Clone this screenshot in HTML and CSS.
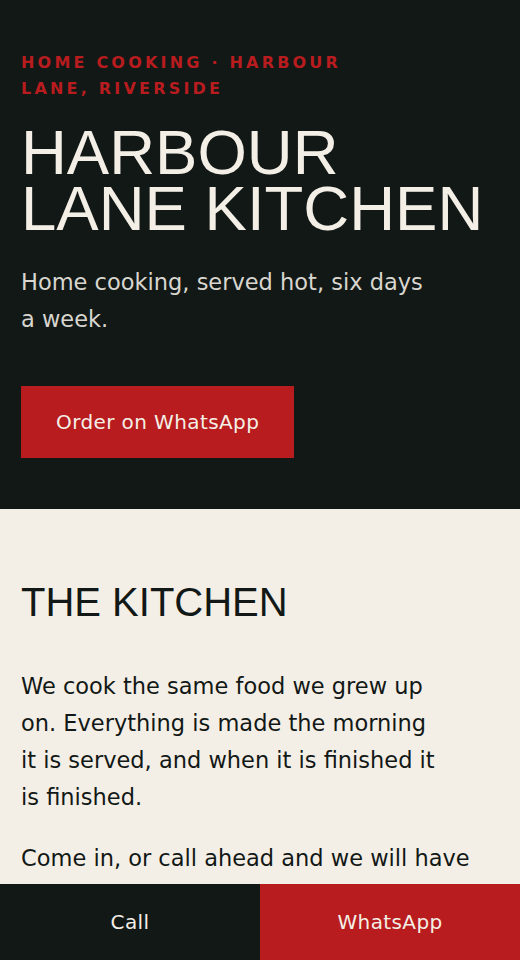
FILE: index.html
```html
<!DOCTYPE html>
<html lang="en">
<head>
  <meta charset="UTF-8">
  <title>Harbour Lane Kitchen</title>
  <link rel="stylesheet" href="styles.css">
</head>
<body>
  <header class="hero">
    <p class="eyebrow">Home cooking · Harbour Lane, Riverside</p>
    <h1>Harbour Lane Kitchen</h1>
    <p class="lead">Home cooking, served hot, six days a week.</p>
    <a class="btn" href="#">Order on WhatsApp</a>
  </header>

  <section class="kitchen">
    <h2>The Kitchen</h2>
    <p>We cook the same food we grew up on. Everything is made the morning it is served, and when it is finished it is finished.</p>
    <p>Come in, or call ahead and we will have your order ready when you arrive.</p>
  </section>

  <nav class="action-bar">
    <a class="call" href="#">Call</a>
    <a class="whatsapp" href="#">WhatsApp</a>
  </nav>
</body>
</html>
```

FILE: styles.css
```css
body {
  margin: 0;
  font-family: "DejaVu Sans", sans-serif;
  background: #f4efe6;
  color: #121816;
  text-wrap: pretty;
}
.hero {
  background: #121816;
  color: #f4efe6;
  padding: 50px 21px 51px;
}
.eyebrow {
  margin: 0 0 22px;
  color: #b81c1e;
  font-size: 16px;
  font-weight: bold;
  letter-spacing: 0.2em;
  line-height: 26px;
  text-transform: uppercase;
}
h1, h2 {
  font-family: "Liberation Sans", Arial, sans-serif;
  font-weight: normal;
  text-transform: uppercase;
}
h1 {
  margin: 0;
  font-size: 63.5px;
  line-height: 56px;
}
.lead {
  margin: 28px 0 48px;
  color: #d8d6cf;
  font-size: 22.5px;
  line-height: 37px;
}
.btn {
  display: inline-block;
  background: #b81c1e;
  color: #f4efe6;
  text-decoration: none;
  font-size: 20px;
  letter-spacing: 0.02em;
  padding: 24px 35px;
}
.kitchen {
  padding: 69px 21px 120px;
}
h2 {
  margin: 0 0 42px;
  font-size: 40px;
  line-height: 48px;
}
.kitchen p {
  margin: 0 0 24px;
  font-size: 22.5px;
  line-height: 37px;
}
.action-bar {
  position: fixed;
  left: 0;
  right: 0;
  bottom: 0;
  display: grid;
  grid-template-columns: 1fr 1fr;
}
.action-bar a {
  height: 76px;
  display: flex;
  align-items: center;
  justify-content: center;
  color: #f4efe6;
  text-decoration: none;
  font-size: 20px;
  letter-spacing: 0.02em;
}
.call {
  background: #121816;
}
.whatsapp {
  background: #b81c1e;
}
```
